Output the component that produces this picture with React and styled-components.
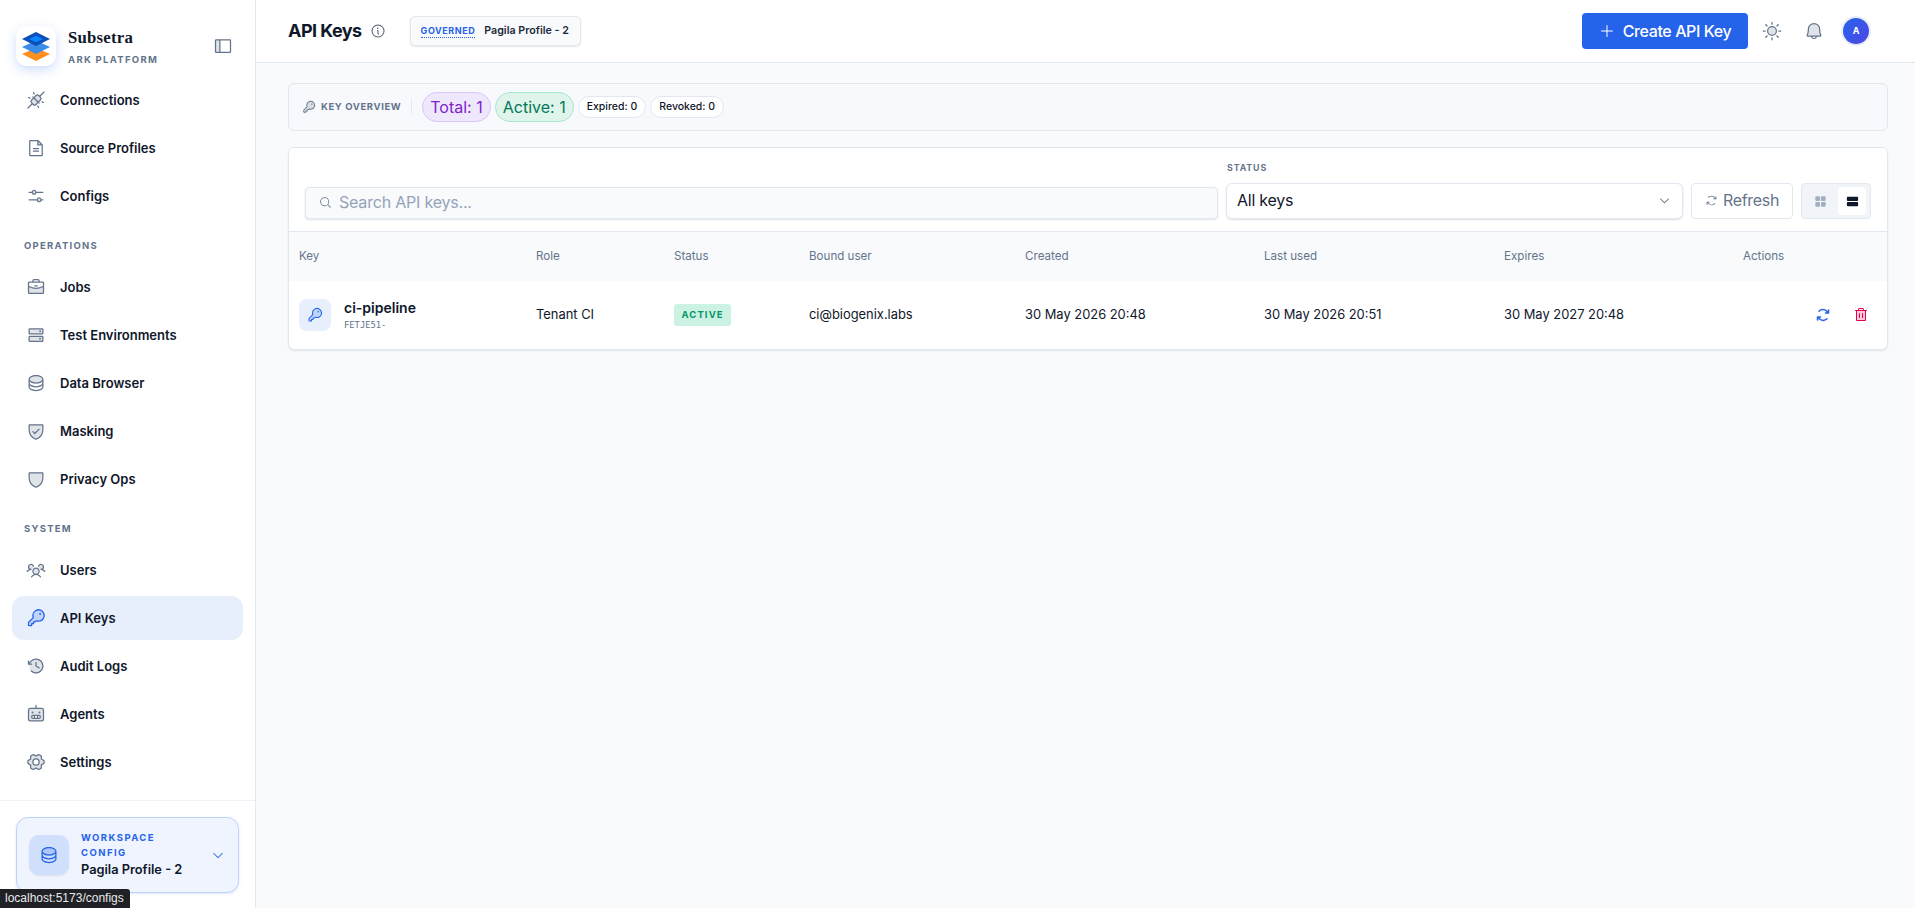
import React from "react";
import styled, { createGlobalStyle } from "styled-components";
import {
  PiPlugsConnectedDuotone, PiFileTextDuotone, PiSlidersHorizontalDuotone, PiBriefcaseDuotone,
  PiHardDrivesDuotone, PiDatabaseDuotone, PiShieldCheckDuotone, PiShieldDuotone, PiUsersThreeDuotone,
  PiKeyDuotone, PiClockCounterClockwiseDuotone, PiRobotDuotone, PiGearSixDuotone, PiSidebarSimpleDuotone,
  PiCaretDown, PiInfo, PiPlus, PiSunDuotone, PiBellDuotone, PiMagnifyingGlass, PiArrowsClockwise,
  PiSquaresFourFill, PiRowsFill, PiArrowsClockwiseBold, PiTrashDuotone,
} from "react-icons/pi";

const Global = createGlobalStyle`
  html, body { margin: 0; padding: 0; height: 100%; }
  body { font-family: Inter, "Liberation Sans", sans-serif; background: #f8fafc; color: #0f172a; overflow: hidden; }
  #root { height: 100%; }
  * { box-sizing: border-box; }
`;

const Shell = styled.div`display: flex; height: 908px; width: 1915px;`;
const Sidebar = styled.aside`
  width: 256px; flex: none; background: #fff; border-right: 1px solid #e2e8f0;
  display: flex; flex-direction: column; position: relative;
`;
const Brand = styled.div`display: flex; align-items: flex-start; height: 76px; padding: 26px 22px 0 16px; flex: none;`;
const LogoBox = styled.div`
  width: 40px; height: 40px; border-radius: 10px; background: #fff; flex: none;
  box-shadow: 0 4px 12px rgba(37,99,235,.22); display: flex; align-items: center; justify-content: center;
`;
const BrandText = styled.div`margin-left: 12px; flex: 1; display: flex; flex-direction: column; padding-top: 2px;`;
const BrandName = styled.div`font: 700 16.8px/20px "Liberation Serif", serif; color: #0f172a; letter-spacing: .2px;`;
const BrandSub = styled.div`font: 700 9.5px/12px Inter, sans-serif; color: #64748b; letter-spacing: 1.3px; margin-top: 6px;`;
const Toggle = styled.div`color: #64748b; display: flex; font-size: 20px; margin-top: 10px;`;
const Nav = styled.nav`display: flex; flex-direction: column; padding: 0 12px; flex: 1; margin-top: 2px;`;
const Item = styled.div`
  height: 44px; margin-bottom: 4px; display: flex; align-items: center; gap: 14px; padding-left: 14px; border-radius: 12px;
  font: 600 13px/16px Inter, sans-serif; color: #0f172a;
  background: ${p => (p.$active ? "#e8effc" : "transparent")};
  svg { font-size: 20px; flex: none; color: ${p => (p.$active ? "#2563eb" : "#64748b")}; }
`;
const Section = styled.div`
  font: 700 9.5px/12px Inter, sans-serif; letter-spacing: 1.25px; color: #64748b; padding-left: 12px;
  height: 12px; margin: 18px 0 13px;
`;
const Foot = styled.div`border-top: 1px solid #eef2f7; padding: 16px 16px 15px; flex: none;`;
const WsCard = styled.div`
  height: 76px; border: 1px solid #bfd3f8; border-radius: 12px; background: #eff4fe; display: flex; align-items: center;
  padding: 0 12px; box-shadow: 0 1px 3px rgba(37,99,235,.15);
`;
const WsIcon = styled.div`
  width: 40px; height: 40px; border-radius: 10px; background: #d0dffb; color: #2563eb; display: flex; align-items: center;
  justify-content: center; font-size: 20px; flex: none; box-shadow: 0 1px 2px rgba(15,23,42,.08);
`;
const WsText = styled.div`margin-left: 12px; flex: 1; padding-bottom: 2px;`;
const WsLabel = styled.div`font: 700 9.5px/15px Inter, sans-serif; letter-spacing: 1.45px; color: #2563eb; width: 90px;`;
const WsName = styled.div`font: 600 12.8px/18px Inter, sans-serif; color: #0f172a; margin-top: 1px;`;
const WsCaret = styled.div`color: #2563eb; display: flex; font-size: 14px; margin-left: -1px; margin-right: 1px;`;
const StatusTip = styled.div`
  position: absolute; left: 0; bottom: 0; height: 19px; width: 130px; background: #202124; color: #e8eaed;
  font: 12px/19px "Liberation Sans", sans-serif; padding-left: 5px; border-top-right-radius: 3px;
`;

const Main = styled.main`flex: 1; min-width: 0; display: flex; flex-direction: column;`;
const Header = styled.header`
  height: 63px; flex: none; background: #fff; border-bottom: 1px solid #e2e8f0; display: flex; align-items: center;
  padding: 0 46px 1px 32px;
`;
const Title = styled.h1`font: 700 18px/24px Inter, sans-serif; margin: 1px 0 0; letter-spacing: -.55px; color: #0f172a;`;
const InfoIc = styled.span`display: flex; font-size: 16px; color: #475569; margin-left: 8px;`;
const Chip = styled.div`
  margin-left: 24px; height: 30px; width: 171px; border: 1px solid #e2e8f0; border-radius: 5px; background: #f8fafc;
  box-shadow: 0 1px 2px rgba(15,23,42,.1); display: flex; align-items: center; padding: 1px 0 0 10px; gap: 9px;
`;
const ChipTag = styled.span`
  font: 700 9px/12px Inter, sans-serif; letter-spacing: .55px; color: #2563eb; border-bottom: 1px dotted #2563eb;
`;
const ChipName = styled.span`font: 600 10.7px/12px Inter, sans-serif; color: #1e293b;`;
const HeadRight = styled.div`margin-left: auto; display: flex; align-items: center;`;
const CreateBtn = styled.button`
  width: 166px; height: 36px; border: 0; border-radius: 4px; background: #2563eb; color: #fff; display: flex; align-items: center;
  justify-content: center; gap: 8px; font: 500 16px/20px Inter, sans-serif; letter-spacing: -.4px;
  svg { font-size: 16px; }
`;
const HeadIcon = styled.span`display: flex; font-size: 20px; color: #64748b; margin-left: ${p => p.$ml}px;`;
const Avatar = styled.div`
  width: 26px; height: 26px; margin-left: 19px; border-radius: 50%; background: linear-gradient(135deg,#2563eb,#4f46e5);
  box-shadow: 0 0 0 2px #e8edf7; color: #fff; font: 700 9px/26px Inter, sans-serif; text-align: center;
`;
const Content = styled.div`padding: 20px 27px 0 32px; display: flex; flex-direction: column; gap: 16px;`;
const Overview = styled.div`
  height: 48px; border: 1px solid #e2e8f0; border-radius: 6px; background: #f7f9fc; display: flex; align-items: center; padding: 0 13px;
`;
const OvIcon = styled.span`display: flex; color: #64748b; font-size: 14px;`;
const OvLabel = styled.span`font: 700 9.5px/12px Inter, sans-serif; letter-spacing: .6px; color: #64748b; margin-left: 5px;`;
const OvSep = styled.span`width: 1px; height: 16px; background: #e2e8f0; margin: 0 10px;`;
const Pills = styled.div`display: flex; align-items: center; gap: 4px;`;
const BigPill = styled.span`
  height: 30px; border-radius: 15px; padding: 0 7px; display: flex; align-items: center; font: 400 16px/20px Inter, sans-serif;
  border: 1px solid ${p => p.$bd}; background: ${p => p.$bg}; color: ${p => p.$fg};
`;
const SmallPill = styled.span`
  height: 22px; border-radius: 11px; padding: 0 8px; display: flex; align-items: center; font: 500 10.5px/14px Inter, sans-serif;
  border: 1px solid #e2e8f0; background: #fff; color: #0f172a;
`;
const Card = styled.section`
  height: 203px; border: 1px solid #e2e8f0; border-radius: 6px; background: #fff; box-shadow: 0 1px 2px rgba(15,23,42,.08); overflow: hidden;
  display: flex; flex-direction: column;
`;
const Toolbar = styled.div`
  height: 84px; flex: none; border-bottom: 1px solid #e2e8f0; display: flex; align-items: flex-end; padding: 0 16px 12px 16px; gap: 8px;
`;
const Search = styled.div`
  flex: 1; height: 32px; border: 1px solid #e2e8f0; border-radius: 4px; background: #f8fafc; box-shadow: 0 1px 2px rgba(15,23,42,.12);
  display: flex; align-items: center; padding: 0 0 2px 13px; gap: 7px; color: #94a3b8; font: 400 16px/20px Inter, sans-serif; letter-spacing: -.2px;
  svg { font-size: 13px; color: #64748b; }
`;
const StatusField = styled.div`width: 457px; display: flex; flex-direction: column;`;
const StatusLabel = styled.div`font: 700 8.8px/12px Inter, sans-serif; letter-spacing: .9px; color: #64748b; margin: 0 0 9px 1px;`;
const Select = styled.div`
  height: 36px; border: 1px solid #e2e8f0; border-radius: 6px; background: #fff; box-shadow: 0 1px 2px rgba(15,23,42,.14); display: flex; align-items: center;
  justify-content: space-between; padding: 0 11px 2px 10px; font: 400 16px/20px Inter, sans-serif; letter-spacing: -.25px; color: #0f172a;
  svg { font-size: 13px; color: #64748b; }
`;
const Refresh = styled.div`
  width: 102px; height: 36px; border: 1px solid #e2e8f0; border-radius: 4px; background: #fff; color: #64748b; display: flex; align-items: center; justify-content: center; gap: 5px;
  padding-bottom: 2px; font: 400 16px/20px Inter, sans-serif; letter-spacing: -.3px;
  svg { font-size: 13px; }
`;
const ViewGroup = styled.div`
  width: 70px; height: 36px; border: 1px solid #e2e8f0; border-radius: 4px; background: #f1f5f9; display: flex; align-items: center;
  justify-content: space-between; padding: 3px 4px 3px 3px;
`;
const ViewBtn = styled.span`
  width: ${p => (p.$on ? 28 : 30)}px; height: 28px; border-radius: 4px; display: flex; align-items: center; justify-content: center; font-size: 15px;
  background: ${p => (p.$on ? "#fff" : "transparent")}; color: ${p => (p.$on ? "#0f172a" : "#a3afc0")};
`;
const Cols = "237px 138px 135px 216px 239px 240px 239px 1fr";
const HeadRow = styled.div`
  height: 49px; flex: none; background: #f8fafc; display: grid; grid-template-columns: ${Cols}; align-items: center; padding: 0 0 1px 10px;
  font: 400 11.6px/16px Inter, sans-serif; color: #64748b;
`;
const Row = styled.div`
  flex: 1; display: grid; grid-template-columns: ${Cols}; align-items: center; padding-left: 10px; font: 400 12.9px/18px Inter, sans-serif; color: #0f172a;
`;
const KeyCell = styled.div`display: flex; align-items: center; gap: 13px;`;
const KeyIcon = styled.div`
  width: 32px; height: 32px; border-radius: 8px; background: #e8effc; color: #2563eb; display: flex; align-items: center; justify-content: center; font-size: 16px;
`;
const KeyName = styled.div`font: 600 14px/18px Inter, sans-serif; color: #0f172a;`;
const KeyId = styled.div`font: 400 8.8px/12px "DejaVu Sans Mono", monospace; color: #64748b; margin-top: 2px;`;
const Badge = styled.span`
  display: inline-block; height: 22px; padding: 0 7.5px; border-radius: 3px; background: #ccf2e3; color: #059669;
  font: 700 9.5px/22px Inter, sans-serif; letter-spacing: 1.1px;
`;
const Actions = styled.div`display: flex; gap: 22px; justify-content: flex-end; padding-right: 18px; font-size: 16px;`;
const ActionIc = styled.span`display: flex; color: ${p => p.$c};`;

const Logo = () => (
  <svg width="30" height="30" viewBox="0 0 30 32" preserveAspectRatio="none">
    <path d="M15 18 L29 24.500 L15 32 L1 24.500Z" fill="#ff8f1f" />
    <path d="M15 10 L29 17 L15 24.500 L1 17Z" fill="#3b8ee8" />
    <path d="M15 1 L29 8.500 L15 16 L1 8.500Z" fill="#0b4fb8" />
    <path d="M15 5 L22 8.500 L15 12 L8 8.500Z" fill="#0a84ff" />
  </svg>
);

const top = [[PiPlugsConnectedDuotone, "Connections"], [PiFileTextDuotone, "Source Profiles"], [PiSlidersHorizontalDuotone, "Configs"]];
const ops = [[PiBriefcaseDuotone, "Jobs"], [PiHardDrivesDuotone, "Test Environments"], [PiDatabaseDuotone, "Data Browser"], [PiShieldCheckDuotone, "Masking"], [PiShieldDuotone, "Privacy Ops"]];
const sys = [[PiUsersThreeDuotone, "Users"], [PiKeyDuotone, "API Keys", true], [PiClockCounterClockwiseDuotone, "Audit Logs"], [PiRobotDuotone, "Agents"], [PiGearSixDuotone, "Settings"]];
const NavList = ({ items }) => items.map(([I, t, a]) => <Item key={t} $active={a}><I />{t}</Item>);

export default function App() {
  return (
    <Shell>
      <Global />
      <Sidebar>
        <Brand>
          <LogoBox><Logo /></LogoBox>
          <BrandText><BrandName>Subsetra</BrandName><BrandSub>ARK PLATFORM</BrandSub></BrandText>
          <Toggle><PiSidebarSimpleDuotone /></Toggle>
        </Brand>
        <Nav>
          <NavList items={top} />
          <Section>OPERATIONS</Section>
          <NavList items={ops} />
          <Section>SYSTEM</Section>
          <NavList items={sys} />
        </Nav>
        <Foot>
          <WsCard>
            <WsIcon><PiDatabaseDuotone /></WsIcon>
            <WsText><WsLabel>WORKSPACE CONFIG</WsLabel><WsName>Pagila Profile - 2</WsName></WsText>
            <WsCaret><PiCaretDown /></WsCaret>
          </WsCard>
        </Foot>
        <StatusTip>localhost:5173/configs</StatusTip>
      </Sidebar>
      <Main>
        <Header>
          <Title>API Keys</Title>
          <InfoIc><PiInfo /></InfoIc>
          <Chip><ChipTag>GOVERNED</ChipTag><ChipName>Pagila Profile - 2</ChipName></Chip>
          <HeadRight>
            <CreateBtn><PiPlus />Create API Key</CreateBtn>
            <HeadIcon $ml={14}><PiSunDuotone /></HeadIcon>
            <HeadIcon $ml={22}><PiBellDuotone /></HeadIcon>
            <Avatar>A</Avatar>
          </HeadRight>
        </Header>
        <Content>
          <Overview>
            <OvIcon><PiKeyDuotone /></OvIcon>
            <OvLabel>KEY OVERVIEW</OvLabel>
            <OvSep />
            <Pills>
              <BigPill $bd="#d8c4fb" $bg="#efe8fd" $fg="#7e22ce">Total: 1</BigPill>
              <BigPill $bd="#a7e6cd" $bg="#dff5ec" $fg="#047857">Active: 1</BigPill>
              <SmallPill>Expired: 0</SmallPill>
              <SmallPill>Revoked: 0</SmallPill>
            </Pills>
          </Overview>
          <Card>
            <Toolbar>
              <Search><PiMagnifyingGlass />Search API keys...</Search>
              <StatusField>
                <StatusLabel>STATUS</StatusLabel>
                <Select>All keys<PiCaretDown /></Select>
              </StatusField>
              <Refresh><PiArrowsClockwise />Refresh</Refresh>
              <ViewGroup>
                <ViewBtn><PiSquaresFourFill /></ViewBtn>
                <ViewBtn $on><PiRowsFill /></ViewBtn>
              </ViewGroup>
            </Toolbar>
            <HeadRow>
              <span>Key</span><span>Role</span><span>Status</span><span>Bound user</span><span>Created</span><span>Last used</span><span>Expires</span><span>Actions</span>
            </HeadRow>
            <Row>
              <KeyCell>
                <KeyIcon><PiKeyDuotone /></KeyIcon>
                <div><KeyName>ci-pipeline</KeyName><KeyId>FETJE51-</KeyId></div>
              </KeyCell>
              <span>Tenant CI</span>
              <span><Badge>ACTIVE</Badge></span>
              <span>ci@biogenix.labs</span>
              <span>30 May 2026 20:48</span>
              <span>30 May 2026 20:51</span>
              <span>30 May 2027 20:48</span>
              <Actions>
                <ActionIc $c="#2563eb"><PiArrowsClockwiseBold /></ActionIc>
                <ActionIc $c="#e60049"><PiTrashDuotone /></ActionIc>
              </Actions>
            </Row>
          </Card>
        </Content>
      </Main>
    </Shell>
  );
}
